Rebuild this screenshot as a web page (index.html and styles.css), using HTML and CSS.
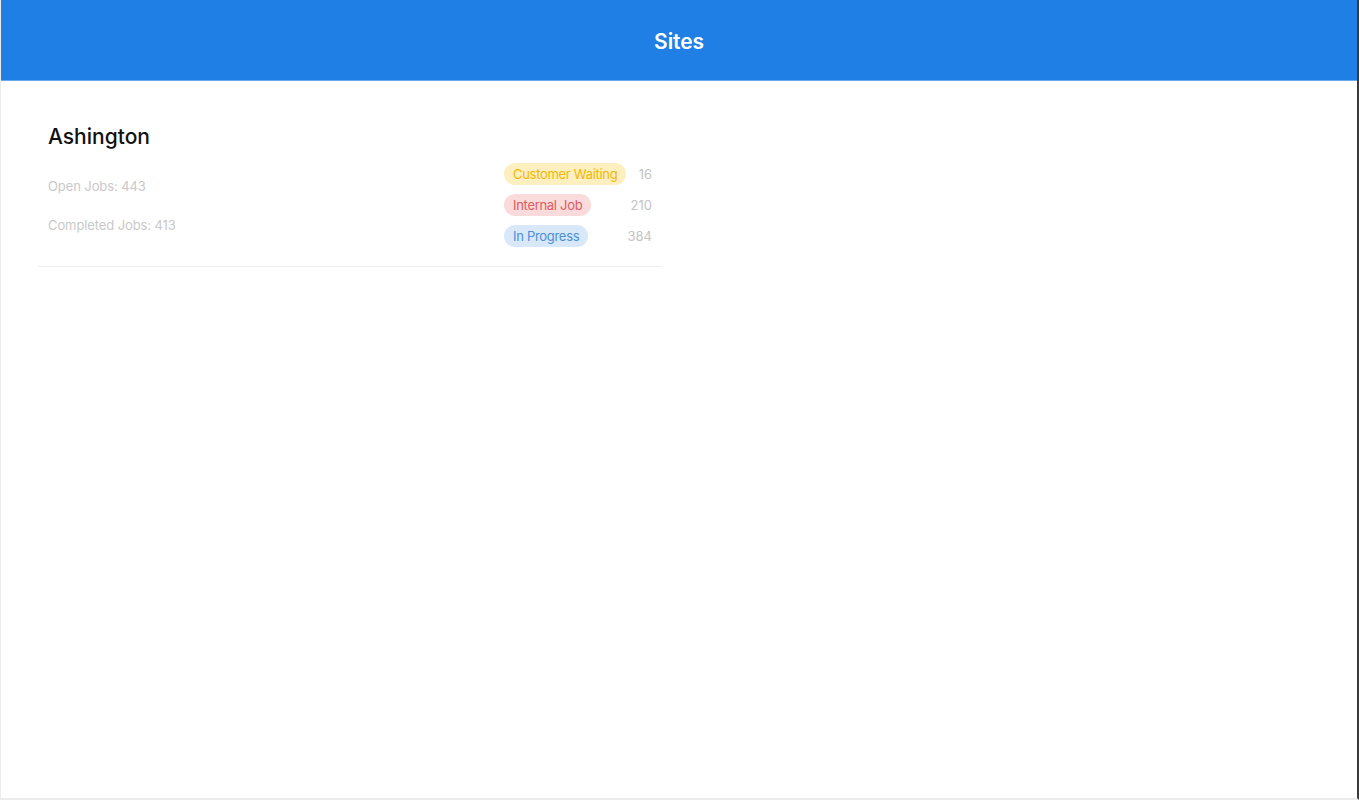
FILE: index.html
```html
<!DOCTYPE html>
<html lang="en">
<head>
  <meta charset="UTF-8">
  <title>Sites</title>
  <link rel="stylesheet" href="styles.css">
</head>
<body>

<div class="screen">
  <header class="topbar">
    <h1>Sites</h1>
  </header>

  <main class="site-list">
    <div class="site">
      <div class="site-info">
        <h2>Ashington</h2>
        <p class="open">Open Jobs: 443</p>
        <p>Completed Jobs: 413</p>
      </div>
      <ul class="status-list">
        <li><span class="badge waiting">Customer Waiting</span><span class="count">16</span></li>
        <li><span class="badge internal">Internal Job</span><span class="count">210</span></li>
        <li><span class="badge progress">In Progress</span><span class="count">384</span></li>
      </ul>
    </div>
  </main>
</div>

</body>
</html>
```

FILE: styles.css
```css
html, body { margin: 0; padding: 0; }
body { background-color: #fff; font-family: Inter, "Noto Sans", sans-serif; }
.screen { height: 800px; box-sizing: border-box; border-left: 1px solid #ececec; border-right: 2px solid #3a3a3a; border-bottom: 2px solid #ececec; display: flex; flex-direction: column; }
.topbar { height: 77px; padding-top: 3px; background-color: #1f7fe4; border-bottom: 1px solid #6aa9ee; display: flex; align-items: center; justify-content: center; }
.topbar h1 { margin: 0; color: #fff; font-size: 21px; font-weight: 600; letter-spacing: -0.1px; }
.site-list { padding: 44px 0 0 37px; }
.site { width: 604px; padding: 0 10px 19px 10px; border-bottom: 1px solid #efefef; display: flex; justify-content: space-between; }
.site-info h2 { margin: 0; font-size: 21px; line-height: 24px; font-weight: 500; color: #111; letter-spacing: 0; }
.site-info p { margin: 21px 0 0 0; font-size: 13px; line-height: 18px; color: #c9c9c9; letter-spacing: -0.1px; }
.site-info p.open { margin-top: 28px; }
.status-list { list-style: none; margin: 38px 0 0 0; padding: 0; display: flex; flex-direction: column; gap: 9px; }
.status-list li { display: flex; align-items: center; justify-content: space-between; gap: 10px; width: 148px; }
.badge { height: 22px; line-height: 22px; padding: 0 9px; border-radius: 11px; font-size: 13px; letter-spacing: -0.3px; }
.waiting { background-color: #fdefc0; color: #f2b705; }
.internal { background-color: #fadadb; color: #de5b61; }
.progress { background-color: #d9e8f9; color: #4b8fd8; }
.count { font-size: 13px; color: #c4c4c4; }
```
